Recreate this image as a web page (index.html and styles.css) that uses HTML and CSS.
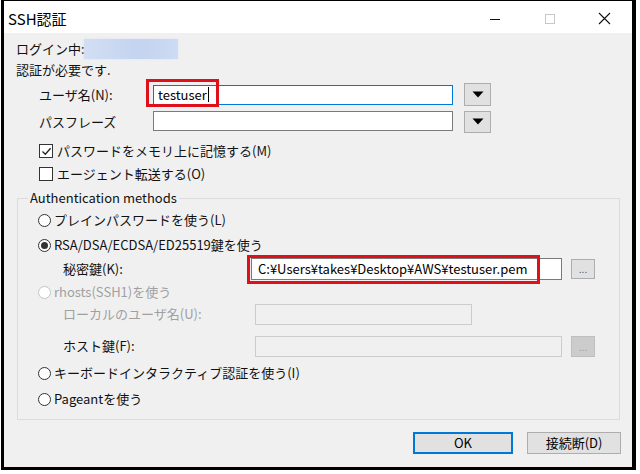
FILE: index.html
```html
<!DOCTYPE html>
<html lang="ja">
<head>
<meta charset="utf-8">
<title>SSH認証</title>
<link rel="stylesheet" href="styles.css">
</head>
<body>
<div class="window">
  <div class="titlebar">
    <span class="title">SSH認証</span>
    <div class="controls">
      <span class="ctl"><svg width="12" height="12" viewBox="0 0 12 12"><line x1="1" y1="6.5" x2="11" y2="6.5" stroke="#111" stroke-width="1"/></svg></span>
      <span class="ctl"><svg width="12" height="12" viewBox="0 0 12 12"><rect x="1.5" y="1.5" width="9" height="9" fill="none" stroke="#c8c8c8" stroke-width="1"/></svg></span>
      <span class="ctl"><svg width="13" height="13" viewBox="0 0 13 13"><path d="M1 1 L12 12 M12 1 L1 12" stroke="#111" stroke-width="1.1" fill="none"/></svg></span>
    </div>
  </div>
  <div class="client">
    <div class="row r-login"><span>ログイン中:</span><span class="masked"></span></div>
    <div class="row r-auth">認証が必要です.</div>
    <div class="row r-user">
      <span class="lbl">ユーザ名(N):</span>
      <div class="input focus"><span>testuser</span><span class="caret"></span></div>
      <span class="drop"><svg width="12" height="7" viewBox="0 0 12 7"><path d="M0.5 0.5 H11.5 L6 6.5 Z" fill="#000"/></svg></span>
    </div>
    <div class="row r-pass">
      <span class="lbl">パスフレーズ</span>
      <div class="input"></div>
      <span class="drop"><svg width="12" height="7" viewBox="0 0 12 7"><path d="M0.5 0.5 H11.5 L6 6.5 Z" fill="#000"/></svg></span>
    </div>
    <div class="row check r-c1"><span class="cb"><svg width="11" height="11" viewBox="0 0 11 11"><path d="M1.5 5.5 L4.3 8.3 L9.6 2.2" fill="none" stroke="#222" stroke-width="1.3"/></svg></span>パスワードをメモリ上に記憶する(M)</div>
    <div class="row check r-c2"><span class="cb"></span>エージェント転送する(O)</div>
    <fieldset class="group">
      <legend>Authentication methods</legend>
      <div class="row radio r-r1"><span class="rb"></span>プレインパスワードを使う(L)</div>
      <div class="row radio r-r2"><span class="rb on"></span>RSA/DSA/ECDSA/ED25519鍵を使う</div>
      <div class="row sub r-key">
        <span class="slbl key">秘密鍵(K):</span>
        <div class="input wide key">C:¥Users¥takes¥Desktop¥AWS¥testuser.pem</div>
        <span class="dots">...</span>
      </div>
      <div class="row radio dis r-rh"><span class="rb off"></span>rhosts(SSH1)を使う</div>
      <div class="row sub r-local">
        <span class="slbl dis">ローカルのユーザ名(U):</span>
        <div class="input disabled local"></div>
      </div>
      <div class="row sub r-host">
        <span class="slbl">ホスト鍵(F):</span>
        <div class="input disabled host"></div>
        <span class="dots off">...</span>
      </div>
      <div class="row radio r-kb"><span class="rb"></span>キーボードインタラクティブ認証を使う(I)</div>
      <div class="row radio r-pg"><span class="rb"></span>Pageantを使う</div>
    </fieldset>
    <div class="buttons">
      <span class="btn ok">OK</span>
      <span class="btn cancel">接続断(D)</span>
    </div>
  </div>
  <div class="mark mark-user"></div>
  <div class="mark mark-key"></div>
</div>
</body>
</html>
```
FILE: styles.css
```css
html, body {
  margin: 0;
  padding: 0;
  background: #ffffff;
}
body {
  font-family: "Noto Sans CJK JP", "Noto Sans", sans-serif;
  font-size: 13px;
  line-height: 16px;
  color: #111;
}
.window {
  position: relative;
  box-sizing: border-box;
  margin-left: 1px;
  width: 635px;
  height: 470px;
  border-style: solid;
  border-color: #000;
  border-width: 1px 4px 3px 3px;
  background: #f0f0f0;
  display: flex;
  flex-direction: column;
}
.titlebar {
  height: 32px;
  background: #fff;
  display: flex;
  align-items: center;
  padding-top: 3px;
  box-sizing: border-box;
}
.title {
  font-size: 15px;
  padding-left: 4px;
  flex: 1;
  color: #000;
}
.controls {
  display: flex;
}
.ctl {
  width: 55px;
  display: flex;
  justify-content: center;
  align-items: center;
}
.client {
  flex: 1;
  display: flex;
  flex-direction: column;
  padding: 0 11px 0 12px;
}
.row {
  display: flex;
  align-items: center;
  white-space: nowrap;
}
.r-login { margin-top: 5px; height: 22px; }
.masked {
  width: 94px;
  height: 20px;
  margin-left: -1px;
  background: linear-gradient(90deg, #d2def3, #c3d4f0 60%, #cddbf3);
  box-shadow: 0 0 2px #d6e1f4;
}
.r-auth { height: 20px; }
.r-user { margin-top: 3px; height: 23px; padding-left: 23px; }
.r-pass { margin-top: 4px; height: 23px; padding-left: 23px; }
.lbl { width: 114px; }
.input {
  box-sizing: border-box;
  width: 300px;
  height: 20px;
  background: #fff;
  border: 1px solid #7a7a7a;
  display: flex;
  align-items: center;
  padding-left: 4px;
  color: #000;
}
.input.focus { border-color: #0078d7; }
.caret {
  width: 1px;
  height: 15px;
  background: #000;
  margin-left: 1px;
}
.drop {
  box-sizing: border-box;
  width: 27px;
  height: 23px;
  margin-left: 11px;
  background: #e1e1e1;
  border: 1px solid #adadad;
  display: flex;
  align-items: center;
  justify-content: center;
}
.r-pass .input { height: 20px; margin-top: -2px; }
.r-pass .drop { height: 22px; }
.check { height: 22px; padding-left: 23px; }
.r-c1 { margin-top: 7px; }
.r-c2 { margin-top: 1px; }
.cb {
  box-sizing: border-box;
  width: 14px;
  height: 14px;
  border: 1px solid #333;
  background: #fff;
  margin-right: 4px;
  display: flex;
  align-items: center;
  justify-content: center;
}
.group {
  box-sizing: border-box;
  width: 603px;
  min-width: 0;
  margin: 5px 0 0 1px;
  padding: 3px 0 9px 0;
  border: 1px solid #dcdcdc;
}
.group legend {
  margin-left: 10px;
  padding: 0 2px;
  line-height: 16px;
  color: #111;
}
.radio { height: 22px; padding-left: 20px; }
.rb {
  box-sizing: border-box;
  width: 13px;
  height: 13px;
  border: 1px solid #333;
  border-radius: 50%;
  background: #fff;
  margin-right: 3px;
  display: flex;
  align-items: center;
  justify-content: center;
}
.rb.on::after {
  content: "";
  width: 7px;
  height: 7px;
  border-radius: 50%;
  background: #333;
}
.rb.off { border-color: #c4c4c4; }
.dis { color: #a0a0a0; }
.r-r2 { margin-top: 3px; }
.sub { padding-left: 45px; }
.r-key { height: 24px; margin-top: 1px; }
.slbl { width: 192px; }
.slbl.key { width: 188px; }
.input.wide { width: 311px; height: 22px; padding-left: 6px; }
.dots {
  box-sizing: border-box;
  width: 24px;
  height: 20px;
  margin-left: 9px;
  background: #e1e1e1;
  border: 1px solid #adadad;
  font-size: 10px;
  line-height: 10px;
  color: #555;
  display: flex;
  justify-content: center;
  align-items: flex-end;
  padding-bottom: 4px;
}
.dots.off {
  background: #cccccc;
  border-color: #bfbfbf;
  color: #a0a0a0;
  height: 21px;
  margin-left: 9px;
}
.r-rh { height: 22px; }
.r-local { height: 22px; }
.input.disabled {
  background: #f0f0f0;
  border-color: #cccccc;
  height: 21px;
}
.input.local { width: 217px; }
.input.host { width: 307px; margin-left: 0; }
.r-host { height: 22px; margin-top: 10px; }
.r-kb { margin-top: 5px; }
.r-pg { margin-top: 4px; }
.buttons {
  display: flex;
  justify-content: flex-end;
  gap: 14px;
  margin-top: 12px;
}
.btn {
  box-sizing: border-box;
  height: 22px;
  background: #e1e1e1;
  border: 1px solid #adadad;
  display: flex;
  align-items: center;
  justify-content: center;
  color: #000;
}
.btn.ok { width: 100px; border: 2px solid #0078d7; }
.btn.cancel { width: 94px; }
.mark {
  position: absolute;
  box-sizing: border-box;
  border: 3px solid #e0101a;
  pointer-events: none;
}
.mark-user { left: 142px; top: 78px; width: 73px; height: 28px; }
.mark-key { left: 243px; top: 254px; width: 293px; height: 29px; }
```
